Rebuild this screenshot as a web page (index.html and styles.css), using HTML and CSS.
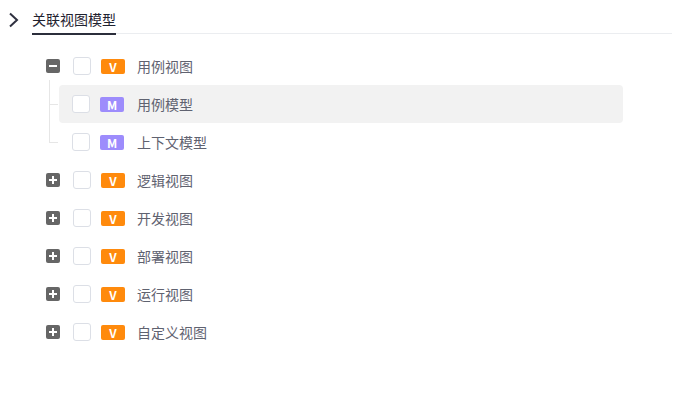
FILE: index.html
```html
<!DOCTYPE html>
<html lang="zh-CN">
<head>
    <meta charset="UTF-8">
    <meta name="viewport" content="width=device-width, initial-scale=1.0">
    <title>关联视图模型</title>
    <link rel="stylesheet" href="styles.css">
</head>
<body>
    <div class="head">
        <span class="chev">
            <svg width="12" height="16" viewBox="0 0 12 16"><polyline points="2,1.5 9,8 2,14.5" fill="none" stroke="#2f3140" stroke-width="2"/></svg>
        </span>
        <div class="tab">关联视图模型</div>
        <div class="rule"></div>
    </div>

    <div class="tree">
        <div class="node">
            <span class="toggle minus"></span>
            <span class="check"></span>
            <span class="badge v">V</span>
            <span class="label">用例视图</span>
        </div>
        <div class="children">
            <div class="node child active">
                <span class="check"></span>
                <span class="badge m">M</span>
                <span class="label">用例模型</span>
            </div>
            <div class="node child">
                <span class="check"></span>
                <span class="badge m">M</span>
                <span class="label">上下文模型</span>
            </div>
        </div>
        <div class="node">
            <span class="toggle plus"></span>
            <span class="check"></span>
            <span class="badge v">V</span>
            <span class="label">逻辑视图</span>
        </div>
        <div class="node">
            <span class="toggle plus"></span>
            <span class="check"></span>
            <span class="badge v">V</span>
            <span class="label">开发视图</span>
        </div>
        <div class="node">
            <span class="toggle plus"></span>
            <span class="check"></span>
            <span class="badge v">V</span>
            <span class="label">部署视图</span>
        </div>
        <div class="node">
            <span class="toggle plus"></span>
            <span class="check"></span>
            <span class="badge v">V</span>
            <span class="label">运行视图</span>
        </div>
        <div class="node">
            <span class="toggle plus"></span>
            <span class="check"></span>
            <span class="badge v">V</span>
            <span class="label">自定义视图</span>
        </div>
    </div>
</body>
</html>
```

FILE: styles.css
```css
*{margin: 0; padding: 0; box-sizing: border-box;}
body {
    background: #fff;
    font-family: "Noto Sans CJK SC", "Noto Sans", sans-serif;
    font-size: 14px;
    color: #5f6270;
}
.head {
    display: flex;
    align-items: flex-end;
    height: 35px;
    padding: 0 9px 0 8px;
}
.chev {
    width: 24px;
    height: 35px;
    display: flex;
    align-items: center;
    padding-top: 4px;
}
.tab {
    color: #1f2230;
    line-height: 20px;
    padding: 9px 0 4px;
    border-bottom: 2px solid #2b2e3b;
}
.rule {
    flex: 1;
    height: 1px;
    margin-bottom: 1px;
    background: #ebedf0;
}
.tree {
    margin: 12px 58px 0 46px;
}
.node {
    display: flex;
    align-items: center;
    height: 38px;
}
.toggle {
    width: 14px;
    height: 14px;
    border-radius: 2px;
    background: #666;
    margin-right: 13px;
    position: relative;
}
.toggle::before, .toggle.plus::after {
    content: "";
    position: absolute;
    background: #fff;
    left: 3px;
    top: 6px;
    width: 8px;
    height: 2px;
}
.toggle.plus::after {
    left: 6px;
    top: 3px;
    width: 2px;
    height: 8px;
}
.check {
    width: 18px;
    height: 18px;
    border: 1px solid #dcdfe6;
    border-radius: 3px;
    background: #fff;
    margin-right: 10px;
}
.badge {
    width: 24px;
    height: 15px;
    border-radius: 2px;
    color: #fff;
    font-size: 12px;
    font-weight: 700;
    line-height: 15px;
    text-align: center;
    margin-right: 12px;
}
.badge.v { background: #ff8a0c; }
.badge.m { background: #9d8cfc; }
.label {
    line-height: 20px;
}
.children {
    margin-left: 13px;
    position: relative;
}
/* 트리 연결선 */
.children::before {
    content: "";
    position: absolute;
    left: -10px;
    top: -5px;
    height: 62px;
    width: 1px;
    background: #e6e6e6;
}
.child {
    padding-left: 13px;
    border-radius: 4px;
    position: relative;
}
.child::before {
    content: "";
    position: absolute;
    left: -10px;
    top: 19px;
    width: 9px;
    height: 1px;
    background: #e6e6e6;
}
.child .badge { margin-right: 13px; }
.child.active {
    background: #f2f2f2;
}
```
